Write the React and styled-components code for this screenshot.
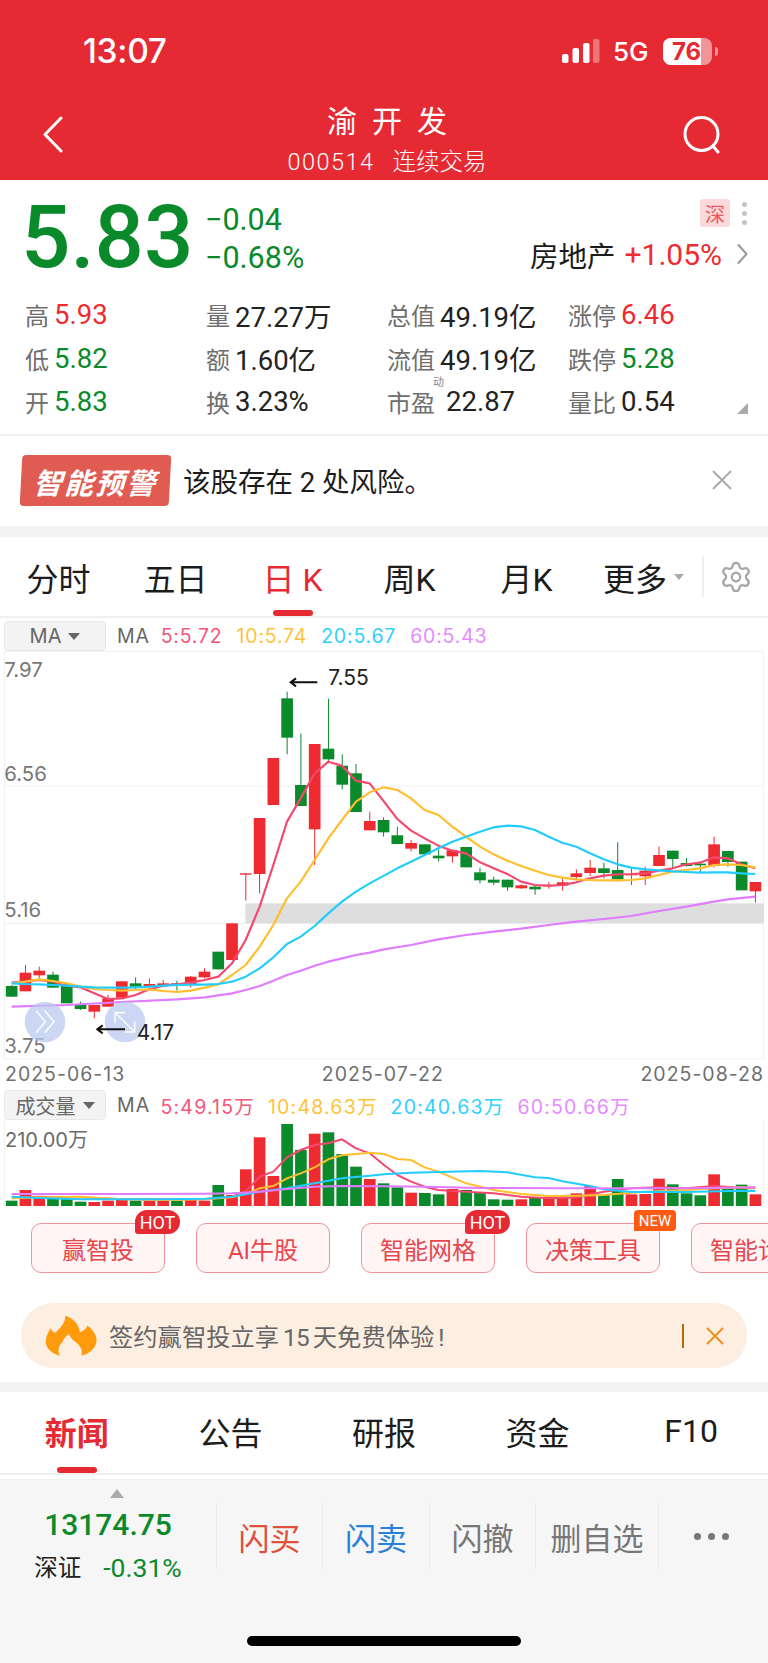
import styled, { createGlobalStyle } from "styled-components";
import { Settings } from "lucide-react";

const FONT = `Roboto, "Noto Sans CJK SC", sans-serif`;
const LATIN = `Inter, "Noto Sans CJK SC", sans-serif`;
const BRAND = "#e52a33";
const RED = "#ee2b30";
const GREEN = "#0a8a2b";
const tones = { red: RED, green: GREEN, dark: "#222" };

const GlobalStyle = createGlobalStyle`
    html, body {
        margin: 0;
        padding: 0;
        background: #fff;
        font-family: ${FONT};
    }
    * { box-sizing: border-box; }
`;

const Page = styled.div`
    width: 768px;
    height: 1663px;
    overflow: hidden;
    position: relative;
    background: #fff;
`;

/* ---------- header ---------- */
const Header = styled.header`
    height: 180px;
    background: ${BRAND};
    color: #fff;
`;
const StatusBar = styled.div`
    height: 102px;
    display: flex;
    align-items: center;
    padding-left: 83px;
`;
const Clock = styled.div`
    font-family: ${LATIN};
    font-size: 33.5px;
    font-weight: 500;
    width: 479px;
    letter-spacing: -0.3px;
`;
const Signal = styled.svg`
    width: 38px;
    height: 26px;
    margin-right: 13px;
`;
const FiveG = styled.div`
    font-family: ${LATIN};
    font-size: 26px;
    font-weight: 500;
    width: 50px;
`;
const Battery = styled.div`
    position: relative;
    width: 49px;
    height: 27px;
    border-radius: 8px;
    overflow: hidden;
    background: rgba(255, 255, 255, 0.5);
    font-family: ${LATIN};
    font-size: 24px;
    font-weight: 700;
    color: ${BRAND};
    display: flex;
    align-items: center;
    padding-left: 9px;

    &::before {
        content: "";
        position: absolute;
        inset: 0 11px 0 0;
        background: #fff;
    }
    span { position: relative; }
`;
const BatteryNub = styled.div`
    width: 3px;
    height: 9px;
    margin-left: 3px;
    border-radius: 0 3px 3px 0;
    background: rgba(255, 255, 255, 0.5);
`;
const NavRow = styled.div`
    height: 78px;
    display: flex;
    justify-content: space-between;
    padding: 14px 47px 0 42px;
`;
const NavIcon = styled.svg`
    fill: none;
    stroke: ${(p) => p.$color || "#fff"};
    stroke-width: ${(p) => p.$sw || 3};
    stroke-linecap: round;
    stroke-linejoin: round;
`;
const TitleBlock = styled.div`
    display: flex;
    flex-direction: column;
    align-items: center;
    margin: -12px 0 0 28px;
`;
const StockName = styled.div`
    font-size: 30px;
    line-height: 36px;
    letter-spacing: 15px;
    margin-right: -15px;
`;
const StockCode = styled.div`
    font-size: 23.5px;
    line-height: 30px;
    margin-top: 7px;
    font-weight: 300;
    white-space: nowrap;
    letter-spacing: 1.5px;

    span {
        margin-left: 18px;
        letter-spacing: 0;
    }
`;

/* ---------- quote ---------- */
const QuoteHead = styled.section`
    height: 113px;
    display: flex;
    padding-left: 21px;
`;
const Price = styled.div`
    font-size: 87px;
    font-weight: 500;
    line-height: 84px;
    margin-top: 15px;
    color: ${GREEN};
    width: 184px;
`;
const Changes = styled.div`
    color: ${GREEN};
    font-size: 30.5px;
    line-height: 38px;
    margin-top: 21px;
`;
const SideInfo = styled.div`
    margin-left: auto;
    padding-top: 19px;
    display: flex;
    flex-direction: column;
    align-items: flex-end;
`;
const BadgeRow = styled.div`
    display: flex;
    align-items: center;
    gap: 12px;
    padding-right: 21px;
`;
const MarketBadge = styled.div`
    width: 30px;
    height: 28px;
    border-radius: 3px;
    background: #fbd9db;
    color: #f0535c;
    font-size: 20px;
    display: flex;
    align-items: center;
    justify-content: center;
`;
const Dots = styled.div`
    display: flex;
    flex-direction: column;
    gap: 4px;
`;
const Dot = styled.i`
    display: block;
    width: 5px;
    height: 5px;
    border-radius: 50%;
    background: #c4c4c4;
`;
const SectorRow = styled.div`
    display: flex;
    align-items: center;
    margin-top: 9px;
    height: 36px;
    padding-right: 20px;
    font-size: 28.5px;
    color: #1b1b1b;

    b {
        font-weight: 400;
        font-size: 30px;
        color: ${RED};
        margin: 0 15px 0 9px;
    }
`;
const StatsGrid = styled.section`
    position: relative;
    height: 141px;
    padding: 0 0 11px 25px;
    display: grid;
    grid-template-columns: repeat(4, 181px);
    grid-auto-rows: 43.5px;
    align-items: center;
`;
const Stat = styled.div`
    position: relative;
    display: flex;
    align-items: center;
    gap: 5px;
`;
const StatLabel = styled.span`
    font-size: 24px;
    color: #6e6e6e;
`;
const StatValue = styled.span`
    font-size: 27.5px;
    color: ${(p) => tones[p.$tone || "dark"]};
    margin-left: ${(p) => p.$ml || 0}px;
`;
const Superscript = styled.span`
    position: absolute;
    left: 46px;
    top: -11px;
    font-size: 11px;
    color: #888;
`;
const CornerMark = styled.div`
    position: absolute;
    right: 20px;
    bottom: 20px;
    width: 0;
    height: 0;
    border-left: 11px solid transparent;
    border-bottom: 11px solid #aaa;
`;

/* ---------- alert ---------- */
const AlertRow = styled.section`
    height: 92px;
    border-top: 2px solid #efefef;
    display: flex;
    align-items: center;
    padding: 0 36px 2px 21px;
`;
const AlertBadge = styled.div`
    width: 149px;
    height: 51px;
    border-radius: 4px;
    background: #e05b52;
    color: #fff;
    transform: skewX(-3deg);
    display: flex;
    align-items: center;
    justify-content: center;
    font-size: 29px;
    font-weight: 700;
    font-style: italic;
    letter-spacing: 2px;
`;
const AlertText = styled.div`
    flex: 1;
    margin-left: 13px;
    font-size: 27.5px;
    color: #1c1c1c;
`;
const CloseIcon = styled.svg`
    fill: none;
    stroke: ${(p) => p.$color};
    stroke-width: 2;
`;
const GapBar = styled.div`
    height: ${(p) => p.$h}px;
    background: #f4f4f4;
`;

/* ---------- tabs ---------- */
const TabBar = styled.nav`
    display: flex;
    align-items: center;
    height: ${(p) => p.$h}px;
    border-bottom: 2px solid #f0f0f0;
    margin-bottom: ${(p) => p.$mb || 0}px;
`;
const Tab = styled.div`
    position: relative;
    width: ${(p) => p.$w}px;
    height: 100%;
    padding-bottom: ${(p) => p.$pb || 0}px;
    display: flex;
    align-items: center;
    justify-content: center;
    font-size: 32px;
    color: ${(p) => (p.$active ? BRAND : "#1c1c1c")};
    font-weight: ${(p) => (p.$bold ? 700 : 400)};

    ${(p) =>
        p.$active &&
        `&::after {
            content: "";
            position: absolute;
            bottom: 0;
            left: 50%;
            width: 40px;
            height: 6px;
            margin-left: -20px;
            border-radius: 3px;
            background: ${BRAND};
        }`}
`;
const Caret = styled.i`
    width: 0;
    height: 0;
    margin-left: 7px;
    border-left: ${(p) => p.$size}px solid transparent;
    border-right: ${(p) => p.$size}px solid transparent;
    border-top: ${(p) => p.$size + 1}px solid ${(p) => p.$color};
`;
const GearSlot = styled.div`
    width: 66px;
    height: 41px;
    border-left: 2px solid #eee;
    display: flex;
    align-items: center;
    justify-content: center;
    color: #a6a6a6;
`;

/* ---------- chart ---------- */
const LegendRow = styled.div`
    height: ${(p) => p.$h}px;
    margin-top: ${(p) => p.$mt || 0}px;
    padding-left: 4px;
    display: flex;
    align-items: flex-end;
`;
const IndicatorButton = styled.div`
    width: 102px;
    height: 30px;
    background: #f3f3f3;
    border: 1px solid #e8e8e8;
    border-radius: 4px;
    display: flex;
    align-items: center;
    justify-content: center;
    font-family: ${LATIN};
    font-size: ${(p) => p.$fs}px;
    color: #666;
`;
const LegendList = styled.div`
    display: flex;
    align-items: center;
    height: 30px;
    margin-left: 11px;
    gap: ${(p) => p.$gap}px;
    font-family: ${LATIN};
    font-size: 19.5px;
    letter-spacing: ${(p) => p.$ls}px;
`;
const LegendItem = styled.span`
    color: ${(p) => p.$color};
    margin-right: ${(p) => p.$mr || 0}px;
`;
const ChartSvg = styled.svg`
    display: block;
    width: 768px;
    height: ${(p) => p.$h}px;
`;
const DateRow = styled.div`
    height: 27px;
    padding: 0 4px 0 5px;
    display: flex;
    align-items: center;
    justify-content: space-between;
    font-family: ${LATIN};
    font-size: 19.5px;
    letter-spacing: 1px;
    color: #6f6f6f;
`;

/* ---------- pills + banner ---------- */
const PillRow = styled.div`
    display: flex;
    gap: 31px;
    padding: 15px 0 0 31px;
    overflow: hidden;
`;
const Pill = styled.div`
    position: relative;
    flex: 0 0 134px;
    height: 50px;
    border: 1.5px solid #f29298;
    border-radius: 10px;
    background: #fff5f5;
    color: #e8464e;
    font-size: 24px;
    display: flex;
    align-items: center;
    justify-content: center;
    white-space: nowrap;
`;
const PillTag = styled.span`
    position: absolute;
    top: -14px;
    right: ${(p) => (p.$kind === "new" ? "-17px" : "-16px")};
    height: ${(p) => (p.$kind === "new" ? 21 : 24)}px;
    width: ${(p) => (p.$kind === "new" ? 42 : 45)}px;
    background: ${(p) => (p.$kind === "new" ? "#ff5a12" : BRAND)};
    color: #fff;
    font-size: ${(p) => (p.$kind === "new" ? 15 : 18)}px;
    border-radius: ${(p) => (p.$kind === "new" ? "4px 4px 4px 0" : "12px 12px 12px 3px")};
    display: flex;
    align-items: center;
    justify-content: center;
`;
const Banner = styled.div`
    margin: 30px 21px 14px;
    height: 65px;
    border-radius: 32px;
    background: #fdeee2;
    display: flex;
    align-items: center;
    padding: 0 23px 0 22px;
`;
const BannerText = styled.div`
    flex: 1;
    margin-left: 9px;
    font-size: 24.3px;
    color: #666;
`;
const BannerNum = styled.span`
    margin: 0 4px;
    letter-spacing: -0.8px;
`;
const BannerDivider = styled.i`
    width: 2px;
    height: 24px;
    background: #b06a10;
    margin-right: 22px;
`;

/* ---------- bottom bar ---------- */
const BottomBar = styled.footer`
    position: relative;
    height: 184px;
    background: #f6f6f6;
    border-top: 1px solid #eee;
    display: flex;
    align-items: flex-start;
`;
const IndexBlock = styled.div`
    width: 216px;
    display: flex;
    flex-direction: column;
    align-items: center;
    padding-top: 9px;
`;
const UpMark = styled.i`
    width: 0;
    height: 0;
    margin-left: 17px;
    border-left: 7px solid transparent;
    border-right: 7px solid transparent;
    border-bottom: 9px solid #aaa;
`;
const IndexValue = styled.div`
    font-size: 30px;
    font-weight: 500;
    line-height: 40px;
    margin-top: 7px;
    color: ${GREEN};
`;
const IndexLine = styled.div`
    margin-top: 7px;
    display: flex;
    align-items: center;
    gap: 22px;
    line-height: 32px;
    font-size: 23.5px;
    color: #222;

    em {
        font-style: normal;
        font-size: 26.5px;
        color: ${GREEN};
    }
`;
const ActionRow = styled.div`
    display: flex;
    margin-top: 22px;
`;
const Action = styled.div`
    width: ${(p) => p.$w}px;
    height: 68px;
    padding-right: ${(p) => p.$pr || 0}px;
    border-left: 1px solid #ebebeb;
    display: flex;
    align-items: center;
    justify-content: center;
    font-size: 31px;
    color: ${(p) => p.$color || "#777"};
`;
const MoreDots = styled.div`
    display: flex;
    gap: 7px;
    i { background: #777; width: 7px; height: 7px; }
`;
const HomeBar = styled.div`
    position: absolute;
    left: 247px;
    bottom: 17px;
    width: 274px;
    height: 10px;
    border-radius: 5px;
    background: #000;
`;

/* ---------- chart data, in 3x pixel units ---------- */
const slotX = (i) => 35 + 41.32 * i;

// [bodyTop, bodyBottom, wickTop, wickBottom, colour]
const candles = [
    [1098, 1130, 1095, 1130, "g"], [1058, 1114, 1035, 1114, "r"], [1052, 1066, 1040, 1075, "r"],
    [1064, 1103, 1055, 1103, "g"], [1092, 1150, 1092, 1150, "g"], [1155, 1167, 1145, 1170, "g"],
    [1155, 1175, 1155, 1195, "r"], [1135, 1160, 1125, 1160, "r"], [1084, 1133, 1084, 1133, "r"],
    [1090, 1100, 1072, 1110, "g"], [1092, 1098, 1075, 1110, "r"], [1090, 1096, 1080, 1100, "r"],
    [1090, 1095, 1082, 1112, "g"], [1070, 1093, 1068, 1103, "r"], [1055, 1072, 1045, 1075, "r"],
    [995, 1048, 995, 1048, "g"], [910, 1020, 910, 1020, "r"], [760, 764, 760, 842, "r"],
    [594, 762, 594, 820, "r"], [414, 555, 414, 555, "r"], [235, 353, 215, 403, "g"],
    [495, 558, 340, 558, "g"], [372, 628, 372, 735, "r"], [386, 418, 236, 430, "g"],
    [437, 494, 403, 508, "g"], [460, 576, 432, 576, "g"], [603, 631, 575, 631, "r"],
    [600, 637, 592, 650, "g"], [646, 672, 620, 672, "g"], [669, 686, 660, 694, "r"],
    [673, 703, 673, 703, "g"], [707, 715, 688, 725, "g"], [691, 709, 688, 728, "r"],
    [681, 742, 681, 742, "g"], [757, 781, 743, 790, "g"], [779, 788, 770, 795, "g"],
    [779, 802, 779, 812, "g"], [796, 805, 793, 806, "r"], [800, 808, 795, 824, "g"],
    [795, 799, 787, 806, "r"], [787, 797, 775, 812, "r"], [760, 771, 748, 778, "r"],
    [743, 759, 720, 768, "r"], [745, 759, 728, 775, "g"], [750, 778, 667, 778, "g"],
    [763, 766, 745, 795, "r"], [752, 769, 740, 795, "r"], [705, 738, 680, 738, "r"],
    [692, 717, 692, 745, "g"], [729, 738, 714, 740, "g"], [731, 736, 725, 757, "g"],
    [673, 738, 650, 742, "r"], [693, 726, 693, 740, "g"], [725, 811, 725, 811, "g"],
    [786, 814, 786, 848, "r"],
];

const priceLines = [
    ["#f4486f", "35,1088 76,1085 117,1080 159,1085 200,1097 241,1102 283,1120 324,1137 366,1135 407,1125 448,1108 490,1097 531,1093 572,1088 614,1080 655,1070 696,1030 737,960 779,860 820,735 861,605 902,535 944,460 985,425 1026,437 1068,482 1109,490 1152,545 1192,597 1233,632 1274,655 1315,677 1357,692 1398,700 1440,727 1481,745 1522,762 1563,785 1605,795 1646,797 1687,795 1729,787 1770,775 1811,767 1853,763 1894,762 1935,760 1977,752 2018,745 2059,733 2100,728 2142,712 2183,715 2224,733 2266,745"],
    ["#ffbe2e", "35,1090 76,1085 117,1078 159,1083 200,1090 241,1100 283,1107 324,1110 366,1112 407,1110 448,1108 490,1113 531,1116 572,1112 614,1103 655,1093 696,1065 737,1035 779,980 820,915 861,835 902,785 944,720 985,655 1026,600 1068,545 1109,517 1152,502 1192,510 1233,535 1274,570 1315,585 1357,620 1398,650 1440,680 1481,703 1522,722 1563,738 1605,752 1646,765 1687,773 1729,778 1770,780 1811,781 1853,781 1894,780 1935,775 1977,765 2018,755 2059,750 2100,745 2142,735 2183,733 2224,735 2266,742"],
    ["#22ccff", "35,1090 76,1092 117,1093 159,1095 200,1097 241,1100 283,1102 324,1103 366,1103 407,1102 448,1100 490,1097 531,1095 572,1094 614,1094 655,1092 696,1085 737,1070 779,1045 820,1012 861,972 902,950 944,918 985,880 1026,845 1068,815 1109,790 1152,767 1192,745 1233,725 1274,705 1315,685 1357,665 1398,650 1440,635 1481,622 1522,617 1563,619 1605,630 1646,650 1687,668 1729,680 1770,700 1811,718 1853,733 1894,743 1935,748 1977,751 2018,754 2059,756 2100,758 2142,757 2183,757 2224,760 2266,762"],
    ["#e07cff", "35,1160 200,1155 366,1146 531,1138 614,1132 696,1120 737,1110 779,1098 820,1082 861,1065 902,1052 944,1037 985,1025 1026,1015 1068,1005 1109,998 1152,988 1233,975 1315,958 1398,945 1481,935 1563,926 1646,915 1729,905 1811,897 1894,888 1977,873 2059,860 2142,845 2183,838 2266,830"],
];

// volume bars: [top, colour]
const volumes = [
    [362, "g"], [330, "r"], [350, "r"], [350, "g"], [350, "g"], [365, "g"], [366, "r"], [362, "r"],
    [360, "r"], [362, "g"], [362, "r"], [362, "r"], [362, "g"], [360, "r"], [362, "r"], [315, "g"],
    [345, "r"], [268, "r"], [172, "r"], [288, "r"], [132, "g"], [210, "g"], [161, "r"], [157, "g"],
    [222, "g"], [260, "g"], [297, "r"], [310, "g"], [322, "g"], [338, "r"], [339, "g"], [343, "g"],
    [327, "r"], [330, "g"], [338, "g"], [358, "g"], [359, "g"], [358, "r"], [352, "g"], [350, "r"],
    [350, "r"], [340, "r"], [318, "r"], [345, "g"], [297, "g"], [343, "r"], [342, "r"], [296, "r"],
    [313, "g"], [340, "g"], [346, "g"], [283, "r"], [323, "g"], [314, "g"], [343, "r"],
];

const volumeLines = [
    ["#f4486f", "35,352 117,350 241,352 366,358 490,358 614,358 696,350 737,335 779,290 820,275 861,232 902,210 944,195 985,190 1026,178 1068,205 1109,220 1152,255 1192,285 1233,305 1274,320 1315,330 1398,335 1481,340 1563,350 1646,355 1729,352 1811,335 1894,325 1977,322 2059,325 2142,318 2224,323 2266,325"],
    ["#ffbe2e", "35,355 117,352 241,350 366,358 490,360 614,358 696,352 737,342 779,325 820,318 861,295 902,280 944,262 985,238 1026,226 1068,222 1109,218 1152,222 1192,237 1233,240 1274,262 1315,275 1398,310 1481,330 1563,342 1646,348 1729,347 1811,345 1894,338 1977,333 2059,330 2142,325 2224,322 2266,323"],
    ["#22ccff", "35,350 117,354 241,358 366,358 490,358 614,356 696,350 737,343 779,335 861,325 944,310 1026,295 1109,287 1152,283 1233,278 1315,276 1440,273 1522,277 1605,292 1646,294 1687,304 1770,318 1811,328 1894,336 1977,335 2059,336 2224,332 2266,333"],
    ["#e07cff", "35,342 200,342 366,342 614,341 696,340 779,335 861,327 944,320 1026,318 1152,319 1274,320 1440,324 1687,325 1894,325 2059,325 2266,322"],
];

const candleColor = { r: RED, g: GREEN };

const CandleChart = () => (
    <ChartSvg $h={409} viewBox="0 93 2304 1227" fontFamily="Inter, sans-serif">
        <g stroke="#f0f0f0" strokeWidth="3" fill="none">
            <path d="M13 94.5 H2290 V1317 H13 Z" />
            <path d="M13 498 H2290 M13 910 H2290" />
        </g>
        <rect x="736" y="850" width="1556" height="60" fill="#dedede" />
        <g fontSize="61" fill="#777">
            <text x="13" y="172">7.97</text>
            <text x="13" y="482">6.56</text>
            <text x="13" y="890">5.16</text>
            <text x="13" y="1298">3.75</text>
        </g>
        {candles.map(([top, bottom, wickTop, wickBottom, c], i) => (
            <g key={i} fill={candleColor[c]}>
                <rect x={slotX(i) - 1.5} y={wickTop} width="3" height={wickBottom - wickTop} />
                <rect x={slotX(i) - 17.5} y={top} width="35" height={bottom - top} />
            </g>
        ))}
        {priceLines.map(([color, points]) => (
            <polyline key={color} points={points} fill="none" stroke={color} strokeWidth="6.5" strokeLinejoin="round" />
        ))}
        <circle cx="135" cy="1206" r="61" fill="#b9c8ee" fillOpacity="0.72" />
        <circle cx="375" cy="1206" r="61" fill="#b9c8ee" fillOpacity="0.72" />
        <g fill="none" stroke="#fff" strokeOpacity="0.85" strokeWidth="5">
            <path d="M108 1172 L136 1205 L108 1238 M134 1172 L162 1205 L134 1238" />
            <path d="M345 1208 V1178 H375 M345 1178 L404 1236 M404 1204 V1236 H374" />
        </g>
        <g stroke="#111" strokeWidth="6" fill="none">
            <path d="M874 187 H952 M888 175 L872 187 L888 199" />
            <path d="M294 1228 H375 M308 1216 L292 1228 L308 1240" />
        </g>
        <g fontSize="63" fill="#222">
            <text x="985" y="196">7.55</text>
            <text x="410" y="1261">4.17</text>
        </g>
    </ChartSvg>
);

const VolumeChart = () => (
    <ChartSvg $h={88} viewBox="0 120 2304 264" fontFamily="Inter, sans-serif">
        <path d="M13 120 V378 M2290 120 V378" stroke="#f0f0f0" strokeWidth="3" />
        <text x="15" y="200" fontSize="60" fill="#6a6a6a">
            210.00<tspan fontFamily="'Noto Sans CJK SC'">万</tspan>
        </text>
        {volumes.map(([top, c], i) => (
            <rect key={i} x={slotX(i) - 17.5} y={top} width="35" height={378 - top} fill={candleColor[c]} />
        ))}
        {volumeLines.map(([color, points]) => (
            <polyline key={color} points={points} fill="none" stroke={color} strokeWidth="6" strokeLinejoin="round" />
        ))}
    </ChartSvg>
);

const Flame = () => (
    <svg width="57" height="45" viewBox="40 20 170 135">
        <path
            fill="#ff9a0a"
            d="M90 148 C62 140 45 122 48 100 C50 85 58 75 62 65 C66 75 72 80 78 78 C90 65 108 50 106 28 C128 35 148 52 150 78 C158 75 168 68 173 58 C190 70 202 88 200 105 C198 125 180 142 155 148 C160 130 150 118 138 108 C130 100 120 95 118 82 C108 90 100 98 98 108 C84 118 84 135 90 148 Z"
        />
    </svg>
);

const stats = [
    ["高", "5.93", "red"], ["量", "27.27万"], ["总值", "49.19亿"], ["涨停", "6.46", "red"],
    ["低", "5.82", "green"], ["额", "1.60亿"], ["流值", "49.19亿"], ["跌停", "5.28", "green"],
    ["开", "5.83", "green"], ["换", "3.23%"], ["市盈", "22.87"], ["量比", "0.54"],
];

const App = () => {
    return (
        <Page>
            <GlobalStyle />
            <Header>
                <StatusBar>
                    <Clock>13:07</Clock>
                    <Signal viewBox="0 0 38 26" fill="#fff">
                        <rect x="0" y="16" width="6.5" height="9" rx="2" />
                        <rect x="10.5" y="10" width="6.5" height="15" rx="2" />
                        <rect x="21" y="5" width="6.5" height="20" rx="2" />
                        <rect x="31" y="1" width="6.5" height="24" rx="2" fillOpacity="0.35" />
                    </Signal>
                    <FiveG>5G</FiveG>
                    <Battery><span>76</span></Battery>
                    <BatteryNub />
                </StatusBar>
                <NavRow>
                    <NavIcon width="21" height="37" viewBox="0 0 21 37">
                        <path d="M19 2 L3 18.5 L19 35" />
                    </NavIcon>
                    <TitleBlock>
                        <StockName>渝开发</StockName>
                        <StockCode>000514<span>连续交易</span></StockCode>
                    </TitleBlock>
                    <NavIcon width="38" height="38" viewBox="0 0 38 38">
                        <circle cx="18.5" cy="18" r="16.5" />
                        <path d="M30 30 L35 36" />
                    </NavIcon>
                </NavRow>
            </Header>

            <QuoteHead>
                <Price>5.83</Price>
                <Changes>
                    <div>−0.04</div>
                    <div>−0.68%</div>
                </Changes>
                <SideInfo>
                    <BadgeRow>
                        <MarketBadge>深</MarketBadge>
                        <Dots><Dot /><Dot /><Dot /></Dots>
                    </BadgeRow>
                    <SectorRow>
                        房地产<b>+1.05%</b>
                        <NavIcon $color="#999" $sw={2} width="11" height="20" viewBox="0 0 11 20">
                            <path d="M1.5 1 L9.5 10 L1.5 19" />
                        </NavIcon>
                    </SectorRow>
                </SideInfo>
            </QuoteHead>
            <StatsGrid>
                {stats.map(([label, value, tone]) => (
                    <Stat key={label}>
                        <StatLabel>{label}</StatLabel>
                        <StatValue $tone={tone} $ml={label === "市盈" ? 6 : 0}>{value}</StatValue>
                        {label === "市盈" && <Superscript>动</Superscript>}
                    </Stat>
                ))}
                <CornerMark />
            </StatsGrid>

            <AlertRow>
                <AlertBadge>智能预警</AlertBadge>
                <AlertText>该股存在 2 处风险。</AlertText>
                <CloseIcon $color="#aaa" width="20" height="20" viewBox="0 0 20 20">
                    <path d="M1 1 L19 19 M19 1 L1 19" />
                </CloseIcon>
            </AlertRow>
            <GapBar $h={11} />

            <TabBar $h={81}>
                <Tab $w={117}>分时</Tab>
                <Tab $w={117}>五日</Tab>
                <Tab $w={117} $active>日 K</Tab>
                <Tab $w={117}>周K</Tab>
                <Tab $w={117}>月K</Tab>
                <Tab $w={117}>更多<Caret $size={5.5} $color="#aaa" /></Tab>
                <GearSlot><Settings size={34} strokeWidth={1.6} /></GearSlot>
            </TabBar>

            <LegendRow $h={33}>
                <IndicatorButton $fs={20}>MA<Caret $size={6} $color="#666" /></IndicatorButton>
                <LegendList $gap={14} $ls={0.8}>
                    <LegendItem $color="#666" $mr={-3}>MA</LegendItem>
                    <LegendItem $color="#f4557a">5:5.72</LegendItem>
                    <LegendItem $color="#ffc23d">10:5.74</LegendItem>
                    <LegendItem $color="#2fd0ff">20:5.67</LegendItem>
                    <LegendItem $color="#e58aff">60:5.43</LegendItem>
                </LegendList>
            </LegendRow>
            <CandleChart />
            <DateRow>
                <span>2025-06-13</span>
                <span>2025-07-22</span>
                <span>2025-08-28</span>
            </DateRow>

            <LegendRow $h={29} $mt={4}>
                <IndicatorButton $fs={20}>成交量<Caret $size={6} $color="#666" /></IndicatorButton>
                <LegendList $gap={13} $ls={1.2}>
                    <LegendItem $color="#666" $mr={-3}>MA</LegendItem>
                    <LegendItem $color="#f4557a">5:49.15万</LegendItem>
                    <LegendItem $color="#ffc23d">10:48.63万</LegendItem>
                    <LegendItem $color="#2fd0ff">20:40.63万</LegendItem>
                    <LegendItem $color="#e58aff">60:50.66万</LegendItem>
                </LegendList>
            </LegendRow>
            <VolumeChart />

            <PillRow>
                <Pill>赢智投<PillTag>HOT</PillTag></Pill>
                <Pill>AI牛股</Pill>
                <Pill>智能网格<PillTag>HOT</PillTag></Pill>
                <Pill>决策工具<PillTag $kind="new">NEW</PillTag></Pill>
                <Pill>智能诊股</Pill>
            </PillRow>
            <Banner>
                <Flame />
                <BannerText>签约赢智投立享<BannerNum>15</BannerNum>天免费体验<BannerNum>!</BannerNum></BannerText>
                <BannerDivider />
                <CloseIcon $color="#f09020" width="18" height="18" viewBox="0 0 18 18">
                    <path d="M1 1 L17 17 M17 1 L1 17" />
                </CloseIcon>
            </Banner>
            <GapBar $h={10} />

            <TabBar $h={83} $mb={4}>
                <Tab $w={153.6} $pb={3} $active $bold>新闻</Tab>
                <Tab $w={153.6} $pb={3}>公告</Tab>
                <Tab $w={153.6} $pb={3}>研报</Tab>
                <Tab $w={153.6} $pb={3}>资金</Tab>
                <Tab $w={153.6} $pb={3}>F10</Tab>
            </TabBar>

            <BottomBar>
                <IndexBlock>
                    <UpMark />
                    <IndexValue>13174.75</IndexValue>
                    <IndexLine>
                        <span>深证</span>
                        <em>-0.31%</em>
                    </IndexLine>
                </IndexBlock>
                <ActionRow>
                    <Action $w={106} $color="#e0503c">闪买</Action>
                    <Action $w={107} $color="#2a7fd6">闪卖</Action>
                    <Action $w={106}>闪撤</Action>
                    <Action $w={123}>删自选</Action>
                    <Action $w={110} $pr={4}>
                        <MoreDots><Dot /><Dot /><Dot /></MoreDots>
                    </Action>
                </ActionRow>
                <HomeBar />
            </BottomBar>
        </Page>
    );
};

export default App;
